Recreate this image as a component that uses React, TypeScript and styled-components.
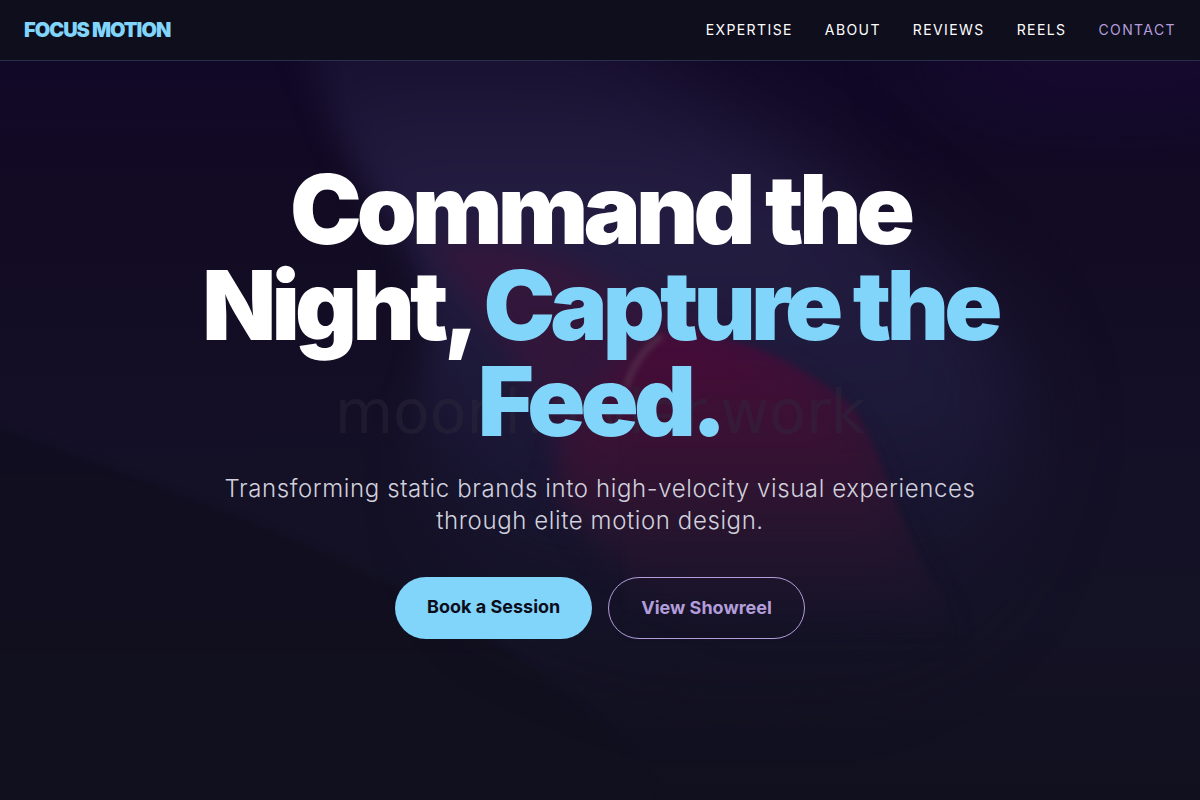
import React from 'react';
import styled, { createGlobalStyle } from 'styled-components';

const Global = createGlobalStyle`
  * { box-sizing: border-box; }
  body { margin: 0; background: #11101e; color: #fff; font-family: Inter, sans-serif; }
`;

const Header = styled.header`
  position: sticky;
  top: 0;
  z-index: 2;
  display: flex;
  align-items: center;
  justify-content: space-between;
  height: 61px;
  padding: 0 24px;
  background: #0f0e1d;
  border-bottom: 1px solid #28304c;
`;

const Brand = styled.a`
  color: #81d4fa;
  font-size: 20px;
  line-height: 28px;
  font-weight: 900;
  letter-spacing: -0.05em;
  text-decoration: none;
`;

const Nav = styled.nav`
  display: flex;
  gap: 32px;
`;

const NavLink = styled.a<{ $accent?: boolean }>`
  color: ${(p) => (p.$accent ? '#b39ddb' : '#fff')};
  font-size: 14px;
  line-height: 20px;
  letter-spacing: 0.1em;
  text-decoration: none;
  text-transform: uppercase;
`;

const Hero = styled.section`
  position: relative;
  display: flex;
  flex-direction: column;
  align-items: center;
  min-height: calc(100vh - 61px);
  padding: 100px 24px 96px;
  overflow: hidden;
  text-align: center;
`;

const Backdrop = styled.svg`
  position: absolute;
  inset: 0;
  width: 100%;
  height: 100%;
`;

const Title = styled.h1`
  position: relative;
  max-width: 896px;
  margin: 0 0 24px;
  font-size: 96px;
  line-height: 96px;
  font-weight: 900;
  letter-spacing: -0.05em;
`;

const Highlight = styled.span`
  color: #81d4fa;
`;

const Lead = styled.p`
  position: relative;
  max-width: 768px;
  margin: 0 0 40px;
  color: #d1d0dd;
  font-size: 24px;
  line-height: 32px;
  font-weight: 300;
  letter-spacing: 0.025em;
`;

const Actions = styled.div`
  position: relative;
  display: flex;
  gap: 16px;
`;

const Action = styled.a<{ $outline?: boolean }>`
  padding: 16px 32px;
  border: ${(p) => (p.$outline ? '1px solid #b39ddb' : '0')};
  border-radius: 31px;
  background: ${(p) => (p.$outline ? 'transparent' : '#81d4fa')};
  color: ${(p) => (p.$outline ? '#b39ddb' : '#0d0d1a')};
  font-size: 18px;
  line-height: 28px;
  font-weight: 700;
  text-decoration: none;
`;

const links = ['Expertise', 'About', 'Reviews', 'Reels', 'Contact'];

function Scene() {
  return (
    <Backdrop viewBox="0 61 1200 739" preserveAspectRatio="xMidYMid slice" aria-hidden="true">
      <defs>
        <linearGradient id="base" x1="0" y1="0" x2="0" y2="1">
          <stop offset="0" stopColor="#110827" />
          <stop offset=".2" stopColor="#120b23" />
          <stop offset=".55" stopColor="#141026" />
          <stop offset=".75" stopColor="#141225" />
          <stop offset="1" stopColor="#11101e" />
        </linearGradient>
        <linearGradient id="petal" x1="0" y1="0" x2="0" y2="1">
          <stop offset="0" stopColor="#181030" />
          <stop offset=".1" stopColor="#1b1434" />
          <stop offset=".24" stopColor="#241d42" />
          <stop offset=".45" stopColor="#201b3d" />
          <stop offset=".7" stopColor="#191632" />
          <stop offset="1" stopColor="#131122" stopOpacity="0" />
        </linearGradient>
        <linearGradient id="rose" gradientUnits="userSpaceOnUse" x1="0" y1="330" x2="0" y2="640">
          <stop offset="0" stopColor="#490b39" />
          <stop offset=".3" stopColor="#3b1135" />
          <stop offset=".6" stopColor="#2a1530" />
          <stop offset=".85" stopColor="#1d152b" stopOpacity=".6" />
          <stop offset="1" stopColor="#191529" stopOpacity="0" />
        </linearGradient>
        <linearGradient id="shade" x1="0" y1="0" x2="0" y2="1">
          <stop offset="0" stopColor="#110d21" />
          <stop offset=".6" stopColor="#11101e" />
        </linearGradient>
        <filter id="soft" x="-30%" y="-30%" width="160%" height="160%" colorInterpolationFilters="sRGB"><feGaussianBlur stdDeviation="3" /></filter>
        <filter id="softer" x="-30%" y="-30%" width="160%" height="160%" colorInterpolationFilters="sRGB"><feGaussianBlur stdDeviation="14" /></filter>
        <filter id="softest" x="-50%" y="-50%" width="200%" height="200%" colorInterpolationFilters="sRGB"><feGaussianBlur stdDeviation="40" /></filter>
        <clipPath id="leftEdge">
          <path d="M290 0 C315 90 345 160 395 230 C435 290 440 350 400 420 L370 640 L500 800 H1300 V0 Z" />
        </clipPath>
      </defs>
      <rect y="61" width="1200" height="739" fill="url(#base)" />
      <ellipse cx="1110" cy="60" rx="180" ry="50" fill="#170a30" filter="url(#softest)" />
      <path d="M-40 412 C140 480 290 530 420 600 C520 660 600 690 700 860 H-40 Z" fill="url(#shade)" filter="url(#soft)" />
      <g filter="url(#softer)">
        <g clipPath="url(#leftEdge)">
          <path d="M250 20 L600 20 C700 100 830 170 900 240 C1000 310 1060 400 1000 520 C1000 580 940 640 860 680 L700 700 L500 600 L440 460 Z" fill="url(#petal)" filter="url(#softest)" />
        </g>
      </g>
      <path d="M425 245 C490 230 560 250 620 290 L720 330 C650 370 600 430 580 500 C560 450 530 350 425 245 Z" fill="#3a153a" opacity=".7" filter="url(#softer)" />
      <g filter="url(#softer)">
        <path d="M665 338 C760 350 840 400 870 470 C885 520 900 560 960 640 L740 640 C660 600 600 560 558 490 C570 410 620 350 665 338 Z" fill="url(#rose)" />
      </g>
      <g filter="url(#soft)">
        <path d="M626 388 C634 360 650 340 668 332 C730 330 800 362 850 405 C885 450 895 530 940 590 L960 660 H626 Z" fill="url(#rose)" opacity=".75" />
      </g>
      <path d="M662 336 C646 346 632 366 626 388" fill="none" stroke="#6b5365" strokeWidth="4" opacity=".6" filter="url(#soft)" />
      <text x="600" y="433" textAnchor="middle" fontFamily="'DejaVu Sans', sans-serif" fontSize="60" fill="#302b3d" opacity=".4">moonhowler.work</text>
    </Backdrop>
  );
}

export default function App() {
  return (
    <>
      <Global />
      <Header>
        <Brand href="#top">FOCUS MOTION</Brand>
        <Nav aria-label="Main">
          {links.map((label) => (
            <NavLink key={label} href={`#${label.toLowerCase()}`} $accent={label === 'Contact'}>
              {label}
            </NavLink>
          ))}
        </Nav>
      </Header>
      <Hero id="top">
        <Scene />
        <Title>
          Command the Night, <Highlight>Capture the Feed.</Highlight>
        </Title>
        <Lead>
          Transforming static brands into high-velocity visual experiences through elite motion design.
        </Lead>
        <Actions>
          <Action href="#contact">Book a Session</Action>
          <Action href="#reels" $outline>View Showreel</Action>
        </Actions>
      </Hero>
    </>
  );
}
